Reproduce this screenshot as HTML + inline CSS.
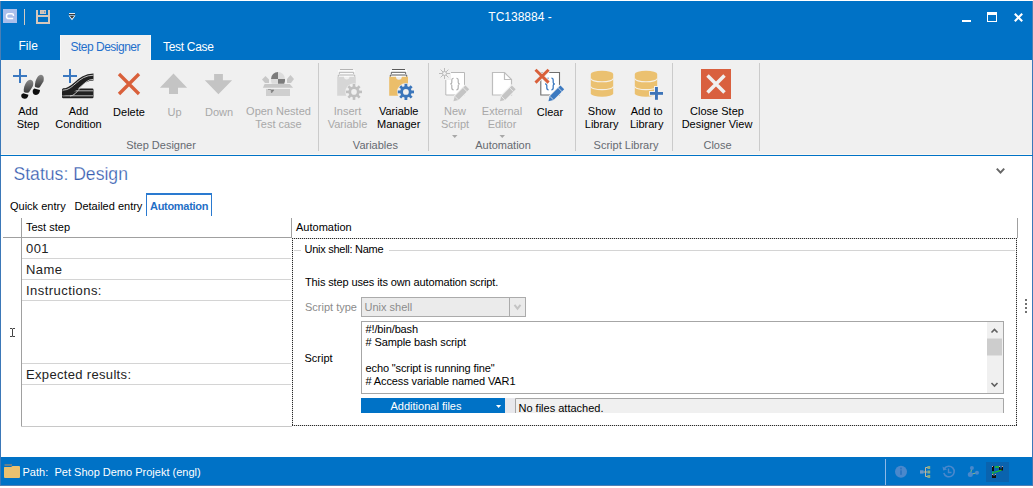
<!DOCTYPE html>
<html><head><meta charset="utf-8">
<style>
*{margin:0;padding:0;box-sizing:border-box}
html,body{width:1033px;height:488px;overflow:hidden;background:#fff}
body{position:relative;font-family:"Liberation Sans",sans-serif;font-size:11px;color:#000}
.a{position:absolute;white-space:pre}
svg{position:absolute;overflow:visible}
.rb{position:absolute;text-align:center;color:#000;font-size:11px;line-height:13px;white-space:pre;width:90px}
.dis{color:#a8a8a8}
.grp{position:absolute;top:139px;color:#666a70;text-align:center;white-space:pre;width:120px;font-size:11px;line-height:13px}
.sep{position:absolute;top:63px;width:1px;height:88px;background:#cbcbcb}
</style></head><body>
<!-- window frame -->
<div class="a" style="left:0;top:1px;width:1033px;height:484px;background:#fff;border-left:1px solid #3b78b8;border-right:1px solid #3b78b8"></div>
<!-- title bar + tab row -->
<div class="a" style="left:0;top:1px;width:1033px;height:59px;background:#0072c6;border-left:1px solid #4a7fb5;border-right:1px solid #4a7fb5"></div>
<!-- app icon -->
<div class="a" style="left:3px;top:9px;width:14px;height:14px;background:#abbfeb"></div>
<svg style="left:3px;top:9px" width="14" height="14"><path d="M10.4 7 V6 Q10.4 4.7 9 4.7 H5.6 Q3.5 4.7 3.5 7.2 Q3.5 9.6 5.6 9.6 H10.2" fill="none" stroke="#fff" stroke-width="1.5"/></svg>
<div class="a" style="left:24px;top:9px;width:1px;height:16px;background:#d3cbc2"></div>
<!-- save icon -->
<svg style="left:36px;top:10px" width="14" height="14"><path d="M0 0 H2 V5 H12 V0 H14 V14 H0 Z M2 7 V12 H12 V7 Z" fill="#d6c7bb" fill-rule="evenodd"/><rect x="4" y="0" width="6" height="4" fill="#d6c7bb"/><rect x="5" y="1" width="2" height="2" fill="#c9bfb8"/><rect x="8" y="1" width="1.2" height="2" fill="#7a9cc4"/></svg>
<!-- qat dropdown -->
<svg style="left:68px;top:12px" width="8" height="10"><rect x="1" y="1" width="6" height="1" fill="#dfe8f3"/><rect x="1" y="2" width="6" height="1.2" fill="#3a3a3a"/><path d="M0.5 3.5 L7.5 3.5 L4 8.3 Z" fill="#fff"/><path d="M1.8 4 L6.2 4 L4 6.8 Z" fill="#3a3a3a"/></svg>
<div class="a" style="left:420px;top:9.5px;width:200px;text-align:center;color:#fff;font-size:12px;line-height:14px">TC138884 -</div>
<!-- window buttons -->
<div class="a" style="left:962px;top:20px;width:9px;height:2px;background:#fff"></div>
<div class="a" style="left:987px;top:12px;width:10px;height:10px;border:1px solid #fff;border-top-width:3px"></div>
<svg style="left:1013px;top:12px" width="11" height="11"><path d="M1.8 1.8 L9.2 9.2 M9.2 1.8 L1.8 9.2" stroke="#fff" stroke-width="2.1"/></svg>
<!-- tabs -->
<div class="a" style="left:18.5px;top:39px;color:#fff;font-size:12px;line-height:14px">File</div>
<div class="a" style="left:60px;top:35px;width:91px;height:25px;background:#f0f0f0;border-left:1px solid #f7f7f7;border-right:1px solid #f7f7f7"></div>
<div class="a" style="left:70.5px;top:40px;color:#1f6fcc;font-size:12px;line-height:14px;letter-spacing:-0.5px">Step Designer</div>
<div class="a" style="left:163px;top:40px;color:#fff;font-size:12px;line-height:14px;letter-spacing:-0.3px">Test Case</div>
<!-- ribbon body -->
<div class="a" style="left:1px;top:60px;width:1031px;height:94px;background:#f0f0f0"></div>
<div class="a" style="left:1px;top:154px;width:1031px;height:1px;background:#fbf8f3"></div>
<div class="a" style="left:0;top:155px;width:1033px;height:1px;background:#0072c6"></div>
<div class="sep" style="left:318px"></div>
<div class="sep" style="left:428px"></div>
<div class="sep" style="left:575px"></div>
<div class="sep" style="left:672px"></div>
<div class="sep" style="left:759px"></div>

<!-- ribbon icons -->
<svg style="left:0;top:0" width="1033" height="160">
<defs>
<linearGradient id="sole" x1="0" y1="0" x2="0" y2="1"><stop offset="0" stop-color="#8a8a8a"/><stop offset="1" stop-color="#3a3a3a"/></linearGradient>
<linearGradient id="rail" x1="0" y1="0" x2="0" y2="1"><stop offset="0" stop-color="#555"/><stop offset="0.5" stop-color="#111"/><stop offset="1" stop-color="#333"/></linearGradient>
</defs>
<!-- add step -->
<rect x="13" y="75" width="14" height="2" fill="#3a78c0"/><rect x="19" y="69" width="2" height="14" fill="#3a78c0"/>
<path d="M30 79.8 C33.3 79.6 33.8 83.5 32.8 86.3 L29 92.2 C27.4 93.2 24.8 92.8 23.8 91.7 C23.2 88 25.8 80.2 30 79.8 Z" fill="url(#sole)"/>
<path d="M23.2 93.3 L28.4 94.8 C28.2 97.2 27 99 24.4 98.8 C21.6 98.6 20.8 96.6 21.4 94.5 Z" fill="#0e0e0e"/>
<path d="M40.8 74.8 C44 74.7 44.2 78.8 43.4 81.6 L39.8 87.2 C38.2 88.1 35.6 87.7 34.9 86.6 C34.6 83 36.7 75.1 40.8 74.8 Z" fill="url(#sole)"/>
<path d="M34.2 88.4 L40 89.9 C39.8 92.6 38.5 95 35.8 94.9 C33 94.7 32.3 92.5 32.9 90 Z" fill="#0e0e0e"/>
<!-- add condition -->
<rect x="63" y="75" width="14" height="2" fill="#3a78c0"/><rect x="69" y="69" width="2" height="14" fill="#3a78c0"/>
<rect x="62" y="88.5" width="31.5" height="9.8" rx="1.2" fill="#202020"/>
<path d="M62.5 90.8 H93 M62.5 95.8 H93" stroke="#c8c8c8" stroke-width="0.9"/>
<path d="M63 92 C75 92 79 77 93.5 77" fill="none" stroke="#202020" stroke-width="7"/>
<path d="M63 90.2 C74 90.2 78 75.2 93.5 75.2 M70 96 C78 96 82 79.3 93.5 79.3" fill="none" stroke="#d0d0d0" stroke-width="0.9"/>
<!-- delete -->
<path d="M119 74 L139 94 M139 74 L119 94" stroke="#d9603b" stroke-width="3.3"/>
<!-- up / down -->
<path d="M173.5 73.6 L187.1 87.7 H178 V94 H169 V87.7 H159.9 Z" fill="#c4c4c4"/>
<path d="M214.1 73.9 H222.9 V80.2 H232.1 L218.4 94.3 L204.8 80.2 H214.1 Z" fill="#c4c4c4"/>
<!-- open nested -->
<path d="M262 79.5 L265.5 76 L269 79.5 L269 83 L265 83 Z" fill="#c8c8c8"/>
<path d="M287 79 L290.5 75 L294 79 L291 83 L287 83 Z" fill="#c8c8c8"/>
<path d="M271 79 A7 7 0 0 1 278 72 V79 Z" fill="#7c7c7c"/>
<path d="M278 72 A7 7 0 0 1 285 79 H278 Z" fill="#dcdcdc"/>
<path d="M271 79 H278 V83.7 H271.8 A7 7 0 0 1 271 79 Z" fill="#dcdcdc"/>
<path d="M278 79 H285 A7 7 0 0 1 284.2 83.7 H278 Z" fill="#7c7c7c"/>
<path d="M264.6 84.1 H289.8 L293.1 87.8 H262.9 Z" fill="#c8c8c8"/>
<rect x="266" y="89" width="24" height="7" fill="#cfcfcf"/>
<path d="M268 89.5 H271 M271 90 L274 90 L271.5 93 Z" stroke="#888" stroke-width="0.7" fill="#777"/>
<!-- insert variable (disabled) -->
<rect x="338" y="70" width="17" height="7" fill="#fafafa"/>
<path d="M340 69.5 H353 M339.3 74 V72.3 H353.7 V74 M338.3 76.8 V75 H354.7 V76.8" fill="none" stroke="#b4b4b4" stroke-width="1"/>
<path d="M337.2 76.8 H344 A2.7 2.7 0 0 0 349.4 76.8 H355.8 V95.7 H337.2 Z" fill="#d6d6d6"/>
<g transform="translate(354 91.9)"><circle r="8.6" fill="#f0f0f0"/><g fill="#c0c0c0"><circle r="5.6"/><rect x="-1.3" y="-8" width="2.6" height="16"/><rect x="-8" y="-1.3" width="16" height="2.6"/><rect x="-1.3" y="-8" width="2.6" height="16" transform="rotate(45)"/><rect x="-1.3" y="-8" width="2.6" height="16" transform="rotate(-45)"/></g><circle r="2.8" fill="#f0f0f0"/></g>
<!-- variable manager -->
<rect x="390" y="70" width="17" height="7" fill="#fff"/>
<path d="M392 69.5 H405 M391.3 74 V72.3 H405.7 V74 M390.3 76.8 V75 H406.7 V76.8" fill="none" stroke="#5a5a5a" stroke-width="1"/>
<path d="M389.2 76.8 H396 A2.9 2.9 0 0 0 401.8 76.8 H408 V95.7 H389.2 Z" fill="#ebbe6a"/>
<g transform="translate(405.9 91.9)"><circle r="8.8" fill="#f0f0f0"/><g fill="#3b76bb"><circle r="5.8"/><rect x="-1.4" y="-8.1" width="2.8" height="16.2"/><rect x="-8.1" y="-1.4" width="16.2" height="2.8"/><rect x="-1.4" y="-8.1" width="2.8" height="16.2" transform="rotate(45)"/><rect x="-1.4" y="-8.1" width="2.8" height="16.2" transform="rotate(-45)"/></g><circle r="2.9" fill="#f0f0f0"/></g>
<!-- new script (disabled) -->
<path d="M451 72.5 H464.5 V95 H445.8 V80" fill="#fff" stroke="#b8b8b8" stroke-width="1"/>
<path d="M448 72.5 H451 V80 H445.8 Z" fill="#f0f0f0"/>
<g stroke="#bbb" stroke-width="1"><path d="M444.5 68 V79 M439 73.5 H450 M440.6 69.6 L448.4 77.4 M448.4 69.6 L440.6 77.4"/></g>
<circle cx="444.5" cy="73.5" r="2" fill="#f0f0f0" stroke="#bbb" stroke-width="1"/>
<path d="M453.6 78.2 Q451.8 78.2 451.8 80.2 V82.6 Q451.8 84 450.2 84 Q451.8 84 451.8 85.4 V87.8 Q451.8 89.8 453.6 89.8 M456.4 78.2 Q458.2 78.2 458.2 80.2 V82.6 Q458.2 84 459.8 84 Q458.2 84 458.2 85.4 V87.8 Q458.2 89.8 456.4 89.8" fill="none" stroke="#b0b0b0" stroke-width="1.15"/>
<path d="M469.20 89.30 L465.40 85.50 L454.72 96.18 L453.44 101.26 L458.52 99.98 Z" fill="#f0f0f0" stroke="#f0f0f0" stroke-width="2"/><path d="M469.20 89.30 L465.40 85.50 L454.72 96.18 L453.44 101.26 L458.52 99.98 Z" fill="#c4c4c4"/><path d="M466.94 91.56 L463.14 87.76 M458.52 99.98 L454.72 96.18" stroke="#f2f2f2" stroke-width="0.8"/>
<!-- external editor (disabled) -->
<path d="M492.5 72.5 H504.5 L511.5 79.5 V95 H492.5 Z" fill="#fff" stroke="#bdbdbd" stroke-width="1.2"/>
<path d="M504.5 72.5 V79.5 H511.5" fill="none" stroke="#bdbdbd" stroke-width="1.2"/>
<path d="M515.70 89.30 L511.90 85.50 L501.22 96.18 L499.94 101.26 L505.02 99.98 Z" fill="#f0f0f0" stroke="#f0f0f0" stroke-width="2"/><path d="M515.70 89.30 L511.90 85.50 L501.22 96.18 L499.94 101.26 L505.02 99.98 Z" fill="#c4c4c4"/><path d="M513.44 91.56 L509.64 87.76 M505.02 99.98 L501.22 96.18" stroke="#f2f2f2" stroke-width="0.8"/>
<!-- clear -->
<path d="M540.8 72.5 H559.5 V95 H540.8 Z" fill="#fff" stroke="#6e6e6e" stroke-width="1.1"/>
<path d="M548.5999999999999 78.2 Q546.8 78.2 546.8 80.2 V82.6 Q546.8 84 545.1999999999999 84 Q546.8 84 546.8 85.4 V87.8 Q546.8 89.8 548.5999999999999 89.8 M551.4000000000001 78.2 Q553.2 78.2 553.2 80.2 V82.6 Q553.2 84 554.8000000000001 84 Q553.2 84 553.2 85.4 V87.8 Q553.2 89.8 551.4000000000001 89.8" fill="none" stroke="#3d7ac0" stroke-width="1.3"/>
<path d="M535.5 69.8 L548.6 82.6 M548.6 69.8 L535.5 82.6" stroke="#f0f0f0" stroke-width="4.8"/>
<path d="M535.5 69.8 L548.6 82.6 M548.6 69.8 L535.5 82.6" stroke="#d9603b" stroke-width="2.9"/>
<path d="M564.20 89.30 L560.40 85.50 L549.72 96.18 L548.44 101.26 L553.52 99.98 Z" fill="#f0f0f0" stroke="#f0f0f0" stroke-width="2"/><path d="M564.20 89.30 L560.40 85.50 L549.72 96.18 L548.44 101.26 L553.52 99.98 Z" fill="#3d7ac0"/><path d="M561.94 91.56 L558.14 87.76 M553.52 99.98 L549.72 96.18" stroke="#e8eef6" stroke-width="0.8"/>
<path d="M452 135 H457.5 L454.75 138 Z" fill="#a8a8a8"/><path d="M499.5 135 H505 L502.25 138 Z" fill="#a8a8a8"/>
<!-- show library -->
<path d="M590.8 74 A11.2 3.2 0 0 1 613.1999999999999 74 V93.5 A11.2 3.2 0 0 1 590.8 93.5 Z" fill="#ebc170"/><path d="M590.8 78.6 A11.2 3.2 0 0 0 613.1999999999999 78.6 M590.8 86.4 A11.2 3.2 0 0 0 613.1999999999999 86.4" fill="none" stroke="#f5f0e6" stroke-width="1.1"/>
<!-- add to library -->
<path d="M634.8 74 A11.2 3.2 0 0 1 657.1999999999999 74 V93.5 A11.2 3.2 0 0 1 634.8 93.5 Z" fill="#ebc170"/><path d="M634.8 78.6 A11.2 3.2 0 0 0 657.1999999999999 78.6 M634.8 86.4 A11.2 3.2 0 0 0 657.1999999999999 86.4" fill="none" stroke="#f5f0e6" stroke-width="1.1"/>
<path d="M654 86 H659 V91 H664 V95.7 H659 V100.8 H654 V95.7 H649 V91 H654 Z" fill="#f0f0f0"/>
<rect x="650" y="92" width="13" height="2.8" fill="#3d74b8"/><rect x="655" y="87" width="2.9" height="12.8" fill="#3d74b8"/>
<!-- close -->
<rect x="701" y="69" width="30" height="30" fill="#d9603f"/>
<path d="M707.5 75.5 L724.5 92.5 M724.5 75.5 L707.5 92.5" stroke="#f0f0f0" stroke-width="3.5"/>
</svg>
<!-- ribbon buttons text -->
<div class="rb" style="left:-17px;top:105px">Add
Step</div>
<div class="rb" style="left:33.5px;top:105px">Add
Condition</div>
<div class="rb" style="left:84px;top:106px">Delete</div>
<div class="rb dis" style="left:129.5px;top:106px">Up</div>
<div class="rb dis" style="left:174px;top:106px">Down</div>
<div class="rb dis" style="left:233.5px;top:105px">Open Nested
Test case</div>
<div class="rb dis" style="left:302.5px;top:105px">Insert
Variable</div>
<div class="rb" style="left:353.7px;top:105px">Variable
Manager</div>
<div class="rb dis" style="left:410px;top:105px">New
Script</div>
<div class="rb dis" style="left:457px;top:105px">External
Editor</div>
<div class="rb" style="left:505px;top:106px">Clear</div>
<div class="rb" style="left:556.6px;top:105px">Show
Library</div>
<div class="rb" style="left:601.7px;top:105px">Add to
Library</div>
<div class="rb" style="left:672px;top:105px">Close Step
Designer View</div>
<div class="grp" style="left:101px">Step Designer</div>
<div class="grp" style="left:315.4px">Variables</div>
<div class="grp" style="left:443px">Automation</div>
<div class="grp" style="left:566px">Script Library</div>
<div class="grp" style="left:657.5px">Close</div>

<!-- content -->
<div class="a" style="left:13.5px;top:166px;font-size:17.6px;line-height:17.6px;color:#355cb0;-webkit-text-stroke:0.25px #fff">Status: Design</div>
<svg style="left:990px;top:160px" width="20" height="20"><path d="M6.8 8.6 L10.5 12.6 L14.2 8.6" fill="none" stroke="#666" stroke-width="2"/></svg>
<div class="a" style="left:10px;top:201px;font-size:11px;line-height:11px">Quick entry</div>
<div class="a" style="left:74.5px;top:201px;font-size:11px;line-height:11px">Detailed entry</div>
<div class="a" style="left:146px;top:193px;width:66px;height:23px;border:1px solid #2a7ad0;border-bottom:none;border-top-width:2px"></div>
<div class="a" style="left:150px;top:201px;font-size:11px;line-height:11px;font-weight:bold;color:#1f6fc6;letter-spacing:-0.3px">Automation</div>
<!-- grid -->
<div class="a" style="left:21px;top:218px;width:1px;height:209px;background:#a0a0a0"></div>
<div class="a" style="left:291px;top:218px;width:1px;height:20px;background:#a0a0a0"></div>
<div class="a" style="left:1017px;top:218px;width:1px;height:20px;background:#a0a0a0"></div>
<div class="a" style="left:3px;top:237px;width:289px;height:1px;background:#a0a0a0"></div>
<div class="a" style="left:26px;top:222px;font-size:11px;line-height:11px">Test step</div>
<div class="a" style="left:296px;top:222px;font-size:11px;line-height:11px">Automation</div>
<div class="a" style="left:22px;top:258px;width:269px;height:1px;background:#d4d4d4"></div>
<div class="a" style="left:22px;top:279px;width:269px;height:1px;background:#d4d4d4"></div>
<div class="a" style="left:22px;top:300px;width:269px;height:1px;background:#d4d4d4"></div>
<div class="a" style="left:22px;top:363px;width:269px;height:1px;background:#d4d4d4"></div>
<div class="a" style="left:22px;top:384px;width:269px;height:1px;background:#d4d4d4"></div>
<div class="a" style="left:21px;top:426px;width:271px;height:1px;background:#c8c8c8"></div>
<div class="a" style="left:26px;top:242px;font-size:13px;line-height:13px;letter-spacing:0.4px;color:#222">001</div>
<div class="a" style="left:26px;top:262.7px;font-size:13px;line-height:13px;letter-spacing:0.4px;color:#222">Name</div>
<div class="a" style="left:26px;top:283.5px;font-size:13px;line-height:13px;letter-spacing:0.45px;color:#222">Instructions:</div>
<div class="a" style="left:26px;top:367.5px;font-size:13px;line-height:13px;letter-spacing:0.33px;color:#222">Expected results:</div>
<svg style="left:8px;top:326px" width="10" height="14"><path d="M2 2.5 H4 L4.5 3 L5 2.5 H7 M4.5 3 V10.5 M2 10.5 H4 L4.5 10 L5 10.5 H7" fill="none" stroke="#444" stroke-width="1"/></svg>
<!-- automation panel -->
<svg style="left:0;top:0" width="1033" height="488">
<path d="M292 238.5 H1017 M292 425.5 H1017 M292.5 238 V426 M1016.5 238 V426" fill="none" stroke="#d8d8d8" stroke-width="1"/>
<path d="M292 238.5 H1017 M292 425.5 H1017 M292.5 238 V426 M1016.5 238 V426" fill="none" stroke="#2a2a2a" stroke-width="1" stroke-dasharray="1 1"/>
<path d="M294 250.5 H301 M389 250.5 H1015" stroke="#d4d4d4" stroke-width="1"/>
<rect x="361.5" y="297.5" width="164" height="19" fill="#ebebeb" stroke="#ababab"/>
<path d="M509.5 298 V316" stroke="#ababab"/>
<path d="M514.5 304.8 L517.5 308.6 L520.5 304.8" fill="none" stroke="#c4c4c4" stroke-width="2"/>
<rect x="361.5" y="321.5" width="642" height="72" fill="#fff" stroke="#a6a6a6"/>
<rect x="987" y="322" width="16" height="71" fill="#f0f0f0"/>
<rect x="987" y="338.5" width="15" height="17" fill="#cdcdcd"/>
<path d="M991.5 332.5 L994.5 329.5 L997.5 332.5" fill="none" stroke="#606060" stroke-width="1.6"/>
<path d="M991.5 383 L994.5 386 L997.5 383" fill="none" stroke="#606060" stroke-width="1.6"/>
<rect x="361" y="398" width="144" height="15" fill="#0072c6"/>
<path d="M496 405 H501.2 L498.6 408 Z" fill="#fff"/>
<rect x="505" y="398" width="10" height="15" fill="#e8e8ec"/>
<rect x="515" y="398" width="489" height="15" fill="#f0f0f0"/>
<path d="M515.5 413 V398.5 H1003.5 V413" fill="none" stroke="#a6a6a6"/>
<rect x="1025" y="299" width="2" height="2" fill="#707070"/>
<rect x="1025" y="303" width="2" height="2" fill="#707070"/>
<rect x="1025" y="307" width="2" height="2" fill="#707070"/>
<rect x="1025" y="311" width="2" height="2" fill="#707070"/>
</svg>
<div class="a" style="left:304.5px;top:244.3px;font-size:11px;line-height:11px;letter-spacing:-0.27px">Unix shell: Name</div>
<div class="a" style="left:305px;top:277px;font-size:11px;line-height:11px;letter-spacing:-0.12px">This step uses its own automation script.</div>
<div class="a" style="left:305px;top:302px;font-size:11px;line-height:11px;color:#8c8c8c">Script type</div>
<div class="a" style="left:364.5px;top:302px;font-size:11px;line-height:11px;color:#8c8c8c">Unix shell</div>
<div class="a" style="left:304.5px;top:353.3px;font-size:11px;line-height:11px">Script</div>
<div class="a" style="left:365.5px;top:323px;font-size:11px;line-height:13px;letter-spacing:-0.12px">#!/bin/bash
# Sample bash script

echo "script is running fine"
# Access variable named VAR1</div>
<div class="a" style="left:360px;top:400.5px;width:132px;text-align:center;font-size:11px;line-height:11px;color:#fff">Additional files</div>
<div class="a" style="left:518.5px;top:402.7px;font-size:11px;line-height:11px">No files attached.</div>
<!-- status bar -->
<div class="a" style="left:0;top:485px;width:1033px;height:1px;background:#4f7fb5"></div>
<div class="a" style="left:0;top:457px;width:1033px;height:28px;background:#0072c6;border-left:1px solid #3b78b8;border-right:1px solid #3b78b8"></div>
<svg style="left:0;top:0" width="1033" height="488">
<path d="M4.5 465 H12" stroke="#a08a70" stroke-width="1.3"/>
<path d="M4 467.5 Q4 467 4.5 467 H11 L12.5 466 H19 Q20 466 20 467 V477 Q20 478 19 478 H5 Q4 478 4 477 Z" fill="#ebc170"/>
<rect x="885" y="459" width="1" height="26" fill="#8db8e6"/>
<circle cx="901" cy="471.7" r="6" fill="#4a88cc"/>
<rect x="900" y="470.3" width="2" height="4.5" fill="#2f76c2"/><rect x="900" y="467.6" width="2" height="1.8" fill="#2f76c2"/>
<rect x="920" y="470.3" width="3.5" height="3.3" fill="#6e98c8"/>
<path d="M923.5 472 H927.5 M925.5 467.5 V476.5 H928 M925.5 467.5 H928" fill="none" stroke="#c2b69c" stroke-width="1"/>
<rect x="927.4" y="466" width="2.8" height="3" fill="#86a98a"/><rect x="927.4" y="470.5" width="2.8" height="3" fill="#86a98a"/><rect x="927.4" y="475" width="2.8" height="3" fill="#86a98a"/>
<path d="M944.5 468.5 A5.3 5.3 0 1 1 943.8 473" fill="none" stroke="#4a88cc" stroke-width="1.6"/>
<path d="M942.5 466.5 L943.2 470.5 L947 469.5 Z" fill="#4a88cc"/>
<path d="M948.5 468.5 V472.5 H951.5" fill="none" stroke="#4a88cc" stroke-width="1.4"/>
<path d="M971.9 468 L970.3 474.5 L977 472.7" fill="none" stroke="#9bbf7a" stroke-width="0.9"/>
<circle cx="971.9" cy="467.9" r="2" fill="#4a88cc"/><circle cx="970.3" cy="474.5" r="2.5" fill="#4a88cc"/><circle cx="977" cy="472.7" r="2" fill="#4a88cc"/>
<rect x="986" y="462" width="23" height="20" fill="#0a63ae"/>
<path d="M992 466 H994 V471 H992 Z" fill="#111"/><path d="M992 466 H993 V467 H992 Z" fill="#c89ab0"/>
<path d="M999 466 H1000.2 V468.5 H1001.8 V466 H1003 V470.6 H999 Z" fill="#151010"/><path d="M999 466 H1000.2 V467 H999 Z M1001.8 466 H1003 V467 H1001.8 Z" fill="#c09aa8"/>
<path d="M992 474 H993.3 V476 H994.8 V474 H996 V478 H992 Z" fill="#151010"/><path d="M992 474 H993.3 V475 H992 Z M994.8 474 H996 V475 H994.8 Z" fill="#c09aa8"/>
<path d="M995 467 H999 M993 471.5 V474 M994.5 472.5 L1001.5 470" fill="none" stroke="#1ec81e" stroke-width="1.3"/>
</svg>
<div class="a" style="left:22.5px;top:467px;font-size:11px;line-height:11px;color:#fff">Path:</div>
<div class="a" style="left:54.5px;top:467px;font-size:11px;line-height:11px;color:#fff">Pet Shop Demo Projekt (engl)</div>
</body></html>
